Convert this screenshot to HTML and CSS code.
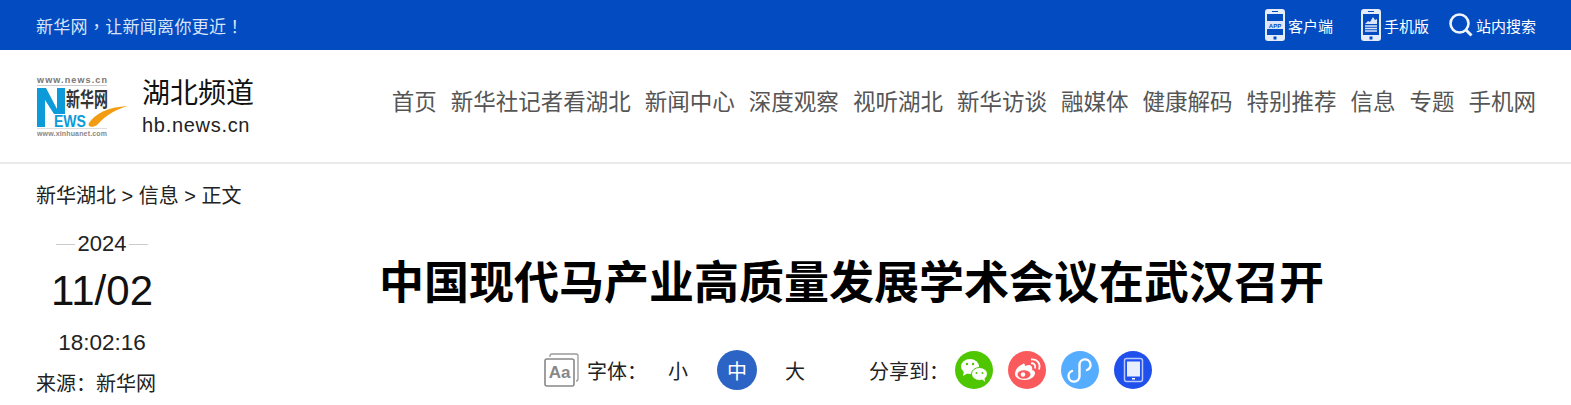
FILE: index.html
```html
<!DOCTYPE html>
<html lang="zh-CN">
<head>
    <meta charset="UTF-8">
    <title>中国现代马产业高质量发展学术会议在武汉召开</title>
    <link rel="stylesheet" href="styles.css">
</head>
<body>
    <div class="topbar">
        <div class="slogan">新华网<span class="punct" lang="zh-TW">，</span>让新闻离你更近<span class="punct" lang="zh-TW">！</span></div>
        <div class="top-links">
            <a class="top-link">
                <svg class="phone-icon" viewBox="0 0 20 32">
                    <rect width="20" height="32" rx="3" fill="#e4ecfa"/>
                    <rect x="2" y="5" width="16" height="21" fill="#034bc1"/>
                    <rect x="2" y="12" width="16" height="8" fill="#dbe5f7"/>
                    <text x="10" y="18.500" class="app-text">APP</text>
                    <rect x="7" y="2" width="6" height="1" fill="#034bc1"/>
                    <rect x="8.500" y="27.500" width="3" height="3" fill="#034bc1"/>
                </svg>
                <span>客户端</span>
            </a>
            <a class="top-link">
                <svg class="phone-icon" viewBox="0 0 20 32">
                    <rect width="20" height="32" rx="3" fill="#e4ecfa"/>
                    <rect x="2" y="5" width="16" height="21" fill="#034bc1"/>
                    <path d="M4 15l3-3 2 1 3-5 2 3 2-1v5z" fill="#dbe5f7"/>
                    <path d="M4 17h12M4 19.500h12M4 22h12" stroke="#dbe5f7" stroke-width="1.400"/>
                    <rect x="7" y="2" width="6" height="1" fill="#034bc1"/>
                    <rect x="8.500" y="27.500" width="3" height="3" fill="#034bc1"/>
                </svg>
                <span>手机版</span>
            </a>
            <a class="top-link search-link">
                <svg class="search-icon" viewBox="0 0 24 24">
                    <circle cx="10.500" cy="10.500" r="9" fill="none" stroke="#eef3fc" stroke-width="2.600"/>
                    <path d="M17 17l5.500 5.500" stroke="#eef3fc" stroke-width="3"/>
                </svg>
                <span>站内搜索</span>
            </a>
        </div>
    </div>

    <header class="site-header">
        <div class="brand">
            <svg class="logo" viewBox="0 0 92 62">
                <text x="0" y="7" textLength="70" class="logo-url">www.news.cn</text>
                <path d="M0 9.500h70" stroke="#ccc"/>
                <path d="M0 12H9L20 33V12H28V38H17L8 24V51H0Z" fill="#0c9bd8"/>
                <text transform="translate(29 31) scale(1 1.450)" class="logo-name">新华网</text>
                <text x="17" y="51" textLength="32" lengthAdjust="spacingAndGlyphs" class="logo-ews">EWS</text>
                <path d="M52 47C58 38 70 31 91 30C80 33 70 38 60 49C56 52 50 51 52 47Z" fill="#f19c12"/>
                <path d="M0 52.500h70" stroke="#ddd"/>
                <text x="0" y="60" textLength="70" class="logo-foot">www.xinhuanet.com</text>
            </svg>
            <div class="channel">
                <div class="channel-name">湖北频道</div>
                <div class="channel-url">hb.news.cn</div>
            </div>
        </div>
        <nav class="main-nav">
            <a>首页</a>
            <a>新华社记者看湖北</a>
            <a>新闻中心</a>
            <a>深度观察</a>
            <a>视听湖北</a>
            <a>新华访谈</a>
            <a>融媒体</a>
            <a>健康解码</a>
            <a>特别推荐</a>
            <a>信息</a>
            <a>专题</a>
            <a>手机网</a>
        </nav>
    </header>

    <div class="article-head">
        <div class="crumbs">新华湖北 &gt; 信息 &gt; 正文</div>
        <div class="head-row">
            <div class="meta">
                <div class="date-year"><span>2024</span></div>
                <div class="date-day">11/02</div>
                <div class="date-time">18:02:16</div>
                <div class="source">来源：新华网</div>
            </div>
            <div class="head-main">
                <h1>中国现代马产业高质量发展学术会议在武汉召开</h1>
                <div class="tools">
                    <svg class="aa-icon" viewBox="0 0 36 34">
                        <path d="M6 4V3a2 2 0 0 1 2-2h24a2 2 0 0 1 2 2v23a2 2 0 0 1-2 2" fill="none" stroke="#999" stroke-width="1.300"/>
                        <rect x="1" y="6" width="29" height="27" rx="2" fill="#fff" stroke="#888" stroke-width="1.600"/>
                        <text x="15.500" y="25" class="aa-text">Aa</text>
                    </svg>
                    <span class="tool-label">字体：</span>
                    <span class="size-btn size-small">小</span>
                    <span class="size-btn size-on">中</span>
                    <span class="size-btn size-large">大</span>
                    <span class="share-label">分享到：</span>
                    <svg class="share-icon" viewBox="0 0 38 38">
                        <circle cx="19" cy="19" r="19" fill="#4ec600"/>
                        <ellipse cx="15" cy="15.500" rx="9" ry="7.500" fill="#fff"/>
                        <path d="M9 20l-1 5 5-3z" fill="#fff"/>
                        <ellipse cx="24.500" cy="23" rx="8" ry="6.500" fill="#fff" stroke="#4ec600"/>
                        <path d="M27 28l3 3-.5-4z" fill="#fff"/>
                        <circle cx="12" cy="13" r="1.200" fill="#4ec600"/>
                        <circle cx="18" cy="13" r="1.200" fill="#4ec600"/>
                        <circle cx="21.500" cy="22" r="1" fill="#4ec600"/>
                        <circle cx="27.500" cy="22" r="1" fill="#4ec600"/>
                    </svg>
                    <svg class="share-icon" viewBox="0 0 38 38">
                        <circle cx="19" cy="19" r="19" fill="#fb5a5c"/>
                        <path d="M15 13c-5 2-8 6-8 10 0 4 5 6 10 6s10-3 10-7c0-2-2-3-3-3 1-3-1-5-3-5-2 0-3 1-4 1 0-2-1-3-2-2z" fill="#fff"/>
                        <ellipse cx="16" cy="23.500" rx="6.500" ry="4.200" fill="#fb5a5c"/>
                        <circle cx="15" cy="23.500" r="2.200" fill="#fff"/>
                        <path d="M23 12.500c3-1 5 2 4 5M23 8.500c6-1 10 4 8 10" fill="none" stroke="#fff" stroke-width="1.800"/>
                    </svg>
                    <svg class="share-icon" viewBox="0 0 38 38">
                        <circle cx="19" cy="19" r="19" fill="#56adff"/>
                        <path d="M11 20A5.500 5.500 0 1 0 18.500 25V14A5.500 5.500 0 1 1 26 19" fill="none" stroke="#fff" stroke-width="2.400" stroke-linecap="round"/>
                    </svg>
                    <svg class="share-icon" viewBox="0 0 38 38">
                        <circle cx="19" cy="19" r="19" fill="#2050ec"/>
                        <rect x="10.500" y="7.500" width="18" height="23" rx="2" fill="none" stroke="#b8c6fb" stroke-width="1.500"/>
                        <rect x="13" y="10.500" width="13" height="15" fill="#e8eefd"/>
                        <rect x="18" y="27" width="3" height="1.500" fill="#fff"/>
                    </svg>
                </div>
            </div>
        </div>
    </div>
</body>
</html>
```

FILE: styles.css
```css
html, body {
    margin: 0;
    padding: 0;
    background-color: #fff;
    overflow: hidden;
}
body {
    font-family: "Liberation Sans", "Noto Sans CJK SC", sans-serif;
    color: #222;
    text-spacing-trim: space-all;
}
.topbar {
    height: 50px;
    background-color: #034bc1;
    display: flex;
    align-items: center;
    justify-content: space-between;
    padding: 0 35px 0 36px;
    color: #fff;
}
.slogan {
    font-size: 17px;
    letter-spacing: 0.3px;
    color: #d9e4f8;
}
.punct {
    font-family: "Noto Sans CJK TC", sans-serif;
}
.top-links {
    display: flex;
    align-items: center;
    gap: 28px;
}
.top-link {
    display: flex;
    align-items: center;
    gap: 3px;
    font-size: 15px;
    color: #fff;
}
.search-link {
    margin-left: -8px;
}
.phone-icon {
    width: 20px;
    height: 32px;
}
.app-text {
    font-size: 6px;
    font-weight: bold;
    fill: #034bc1;
    text-anchor: middle;
}
.search-icon {
    width: 24px;
    height: 24px;
}
.site-header {
    height: 112px;
    border-bottom: 2px solid #eaeaea;
    display: flex;
    align-items: center;
    justify-content: space-between;
    padding: 0 35px 0 37px;
}
.brand {
    display: flex;
    align-items: center;
    gap: 13px;
}
.logo {
    width: 92px;
    height: 62px;
    margin-top: 2px;
}
.logo-url {
    font-size: 9px;
    font-weight: bold;
    fill: #777;
}
.logo-name {
    font-size: 14px;
    font-weight: 700;
    fill: #333;
}
.logo-ews {
    font-size: 17px;
    font-weight: bold;
    fill: #0c9bd8;
}
.logo-foot {
    font-size: 7px;
    font-weight: bold;
    fill: #888;
}
.channel {
    margin-top: 1px;
}
.channel-name {
    font-size: 28px;
    line-height: 36px;
    color: #111;
}
.channel-url {
    font-size: 20px;
    line-height: 26px;
    color: #222;
    letter-spacing: 0.7px;
}
.main-nav {
    display: flex;
    gap: 14px;
    font-size: 22.500px;
    color: #555;
    white-space: nowrap;
    padding-bottom: 12px;
}
.article-head {
    padding: 19px 36px 0;
}
.crumbs {
    font-size: 20px;
    line-height: 26px;
}
.head-row {
    display: flex;
}
.meta {
    width: 132px;
    flex: none;
}
.date-year {
    width: 92px;
    margin: 22px 0 0 20px;
    display: flex;
    align-items: center;
    gap: 3px;
    font-size: 22px;
    line-height: 26px;
}
.date-year::before, .date-year::after {
    content: "";
    flex: 1;
    height: 1px;
    background-color: #ccc;
}
.date-day {
    text-align: center;
    width: 132px;
    font-size: 42px;
    line-height: 50px;
    margin-top: 9px;
    color: #111;
}
.date-time {
    width: 132px;
    text-align: center;
    font-size: 22.500px;
    line-height: 26px;
    margin-top: 14px;
}
.source {
    font-size: 20px;
    line-height: 26px;
    margin-top: 15px;
    white-space: nowrap;
}
.head-main {
    flex: 1;
    padding-left: 211px;
}
h1 {
    margin: 43px 0 0;
    font-size: 45px;
    line-height: 64px;
    font-weight: 700;
    color: #000;
    white-space: nowrap;
}
.tools {
    display: flex;
    align-items: center;
    margin: 34px 0 0 165px;
    font-size: 20px;
}
.aa-icon {
    width: 36px;
    height: 34px;
    margin-right: 7px;
}
.aa-text {
    font-size: 17px;
    font-weight: bold;
    fill: #888;
    text-anchor: middle;
}
.size-btn {
    width: 40px;
    height: 40px;
    border-radius: 50%;
    display: flex;
    align-items: center;
    justify-content: center;
}
.size-small {
    margin-left: 11px;
}
.size-on {
    margin-left: 19px;
    background-color: #2b64c4;
    color: #fff;
}
.size-large {
    margin-left: 18px;
}
.share-label {
    margin: 0 6px 0 54px;
}
.share-icon {
    width: 38px;
    height: 38px;
    margin-right: 15px;
}
```
